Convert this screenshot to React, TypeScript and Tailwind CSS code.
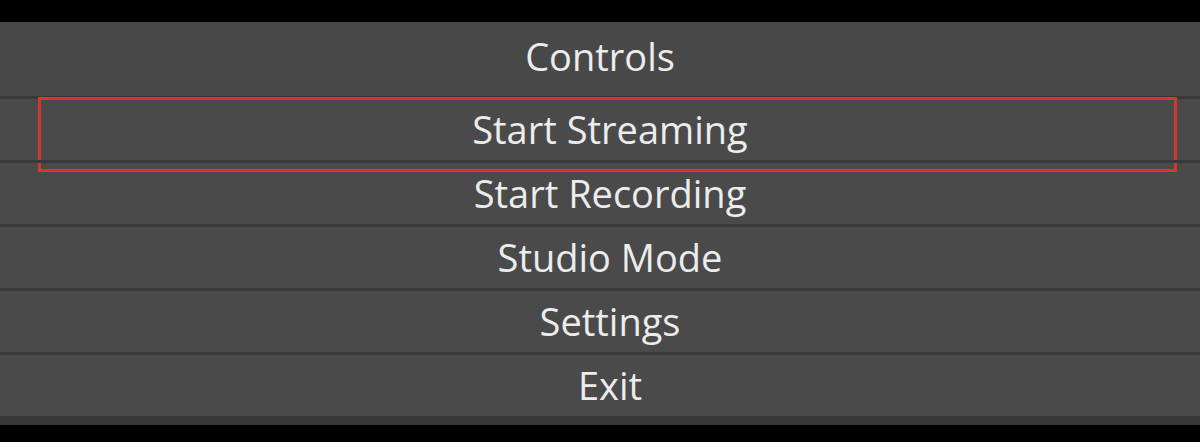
import React from 'react';

const items = ['Start Streaming', 'Start Recording', 'Studio Mode', 'Settings', 'Exit'];

export default function App() {
  const focused = 0;

  return (
    <div
      className="h-[442px] w-[1200px] bg-black pt-[22px]"
      style={{ fontFamily: '"Open Sans", "Noto Sans", sans-serif' }}
    >
      <div className="bg-[#4a4a4a]">
        <div className="flex h-[74px] items-center justify-center bg-[#484848] pb-[6px] text-[38px] text-[#ececec]">
          Controls
        </div>
        {items.map((label, i) => (
          <div
            key={label}
            className="relative flex h-[64px] items-center justify-center border-t-[3px] border-[#393939] pl-[20px] text-[38px] text-[#ececec]"
          >
            {label}
            {i === focused && (
              <div className="pointer-events-none absolute left-[38px] right-[23px] top-[-2px] bottom-[-12px] border-[3px] border-[#d8352e]" />
            )}
          </div>
        ))}
        <div className="h-[9px] bg-[#393939]" />
      </div>
    </div>
  );
}
